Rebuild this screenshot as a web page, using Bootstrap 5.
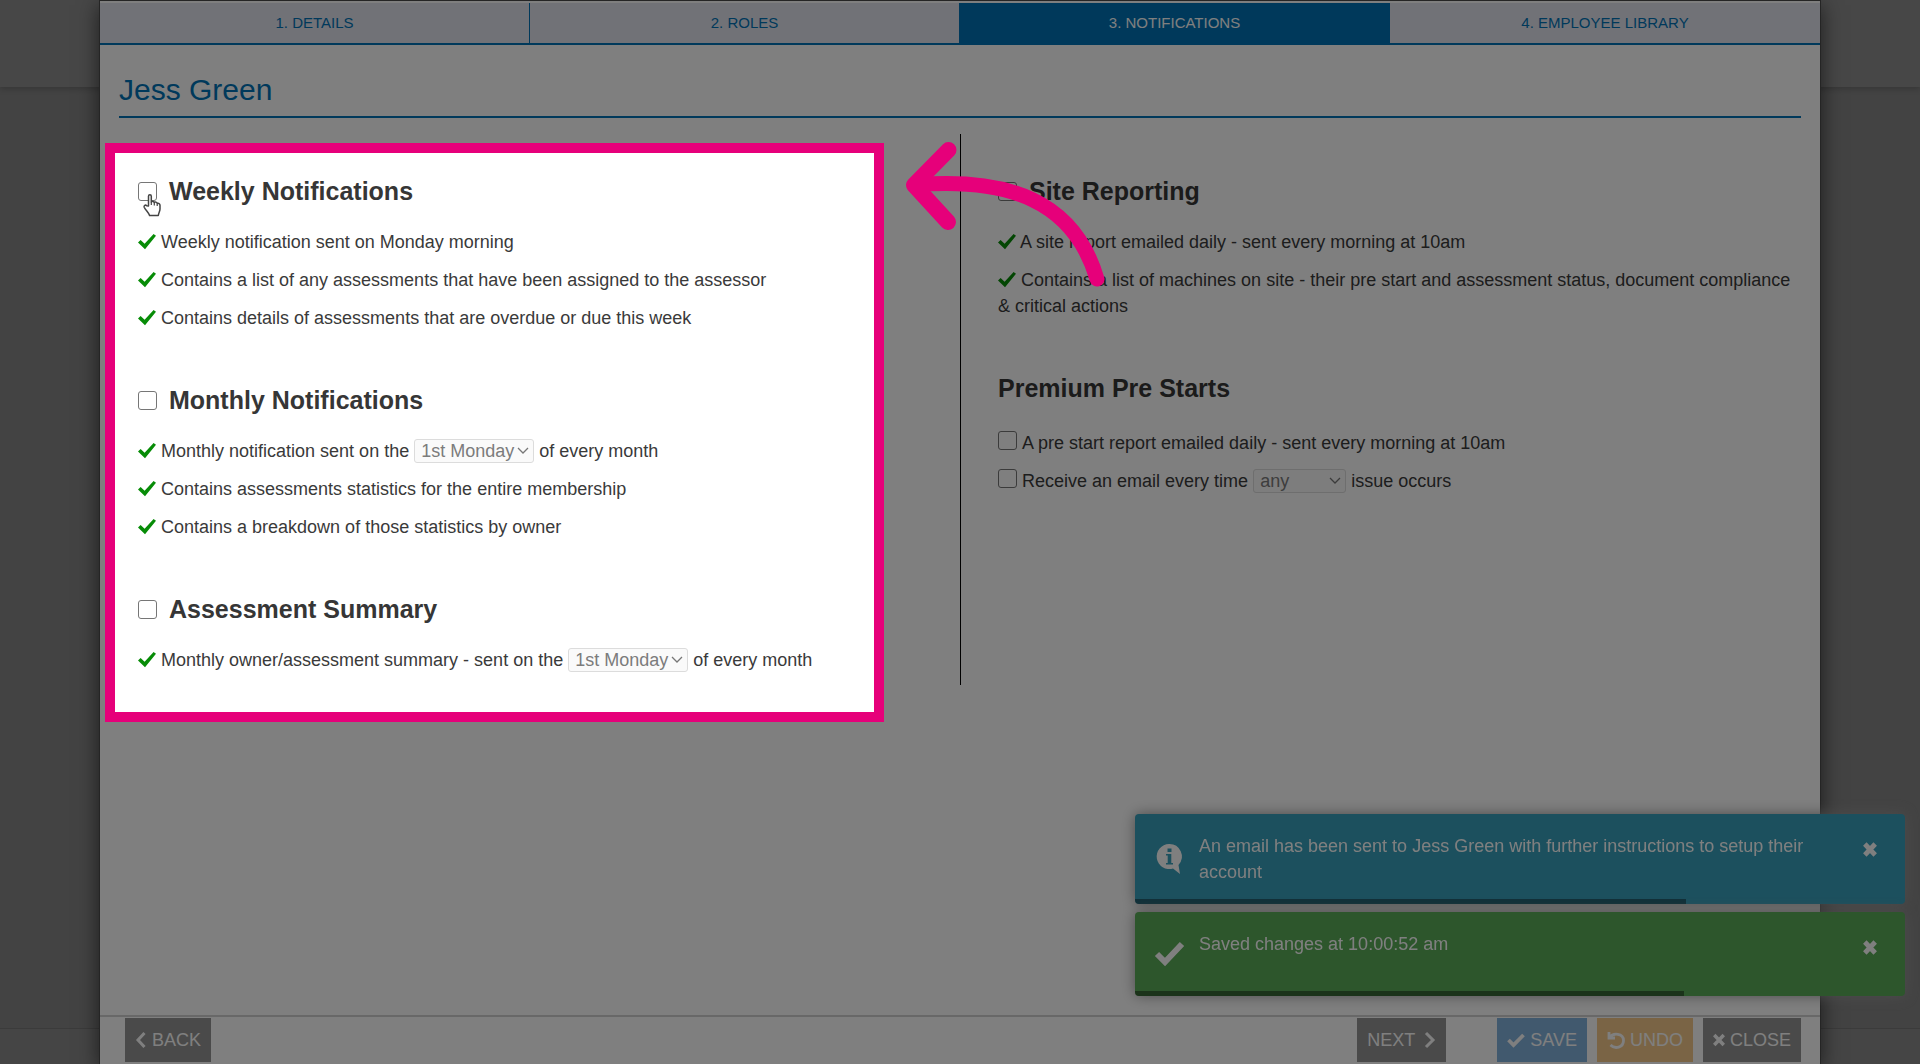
<!DOCTYPE html>
<html lang="en">
<head>
<meta charset="utf-8">
<meta name="viewport" content="width=device-width, initial-scale=1">
<title>Jess Green - Notifications</title>
<link href="https://cdn.jsdelivr.net/npm/bootstrap@5.3.0/dist/css/bootstrap.min.css" rel="stylesheet">
<style>
  :root { --brand: #0073b7; --accent: #e6007a; --ink: #3a3a3a; }
  body { font-family: "Liberation Sans", Arial, sans-serif; font-size: 18px; line-height: 26px; color: var(--ink); background: #868686; }
  .backdrop-head { height: 87px; background: #8e8e8e; box-shadow: 0 2px 6px rgba(0,0,0,.2); }
  .backdrop-foot { height: 36px; background: #8a8a8a; border-top: 1px solid #767676; }
  .dialog-wrap { inset: 0; padding: 0 99px; }
  .dialog-box { background: #fff; border: 1px solid #4a4a4a; border-bottom: 0; padding-top: 2px; box-shadow: 0 5px 20px rgba(0,0,0,.6); }

  .step-tabs { border-bottom: 2px solid var(--brand); }
  .step-tabs .nav-link { padding: 7px 0; border-radius: 0; font-size: 15px; background: #e2e5ee; color: var(--brand); border-right: 1px solid var(--brand); }
  .step-tabs .nav-item:last-child .nav-link { border-right: 0; }
  .step-tabs .nav-link.active { background: var(--brand); color: #fff; }

  .dialog-body { padding: 27px 19px 0; }
  .person-name { margin: 0 0 16px; padding-bottom: 8px; border-bottom: 2px solid var(--brand); font-size: 30px; line-height: 36px; font-weight: 400; color: var(--brand); }
  .pane-left { padding: 0 0 0 19px; }
  .pane-right { padding: 0 6px 0 37px; border-left: 1px solid #000; }
  .notice-group { padding-top: 42px; }
  .notice-title { margin: 0 0 23px; font-size: 25px; line-height: 30px; font-weight: 700; color: #363636; display: flex; align-items: center; gap: 12px; }
  .notice-list { margin: 0; padding: 0; list-style: none; }
  .notice-list li { margin-bottom: 12px; }
  .option-list { padding-top: 4px; }
  .tick { width: 18px; height: 16px; fill: #078c07; vertical-align: -2px; }
  .box { appearance: none; width: 19px; height: 19px; margin: 0; flex: none; background: #fff; border: 1px solid #767676; border-radius: 3px; }
  .option-list .box { vertical-align: -1px; }
  .pick { appearance: none; height: 24px; width: 120px; padding: 0 6px; font-size: 18px; line-height: 22px; color: #7c7c7c; opacity: 1; vertical-align: middle; margin-top: -3px; margin-bottom: -1px;
    border: 1px solid #dcdcdc; border-radius: 3px;
    background: #fafafa url("data:image/svg+xml,%3Csvg xmlns='http://www.w3.org/2000/svg' viewBox='0 0 12 8'%3E%3Cpath d='M1 1l5 5 5-5' fill='none' stroke='%23777' stroke-width='1.3'/%3E%3C/svg%3E") no-repeat right 4px center / 12px 8px; }
  .pick-short { width: 93px; }

  /* Tour step: highlighted region, pointer arrow and hand */
  .spotlight { left: -14px; right: 76px; top: 9px; bottom: -37px; border: 10px solid var(--accent); box-shadow: 0 0 0 200vmax rgba(0,0,0,.5); z-index: 20; pointer-events: none; }
  .tour-arrow { top: 2px; right: -149px; width: 210px; height: 160px; z-index: 21; pointer-events: none; }
  .hand { left: 4px; top: 17px; width: 20px; height: 25px; z-index: 22; }

  .dialog-foot { border-top: 2px solid #d0d0d0; padding: 1px 19px 2px 25px; }
  .act { border: 0; border-radius: 0; height: 44px; padding: 0 10px; font-size: 18px; line-height: 44px; color: #fff; background: #949494; display: flex; align-items: center; gap: 5px; }
  .act:disabled { color: #fff; opacity: .65; }
  .act-save:disabled { background: #428bca; }
  .act-undo:disabled { background: #f0ad4e; }
  .act svg { fill: none; stroke: currentColor; }
  .foot-group { gap: 10px; }
  .gap-next { margin-right: 41px; }

  .notes { right: 15px; bottom: 68px; width: 770px; z-index: 10; }
  .note { min-height: 84px; padding: 19px 19px 13px 64px; border-radius: 4px; color: #fff; box-shadow: 0 0 14px #999; overflow: hidden; }
  .note-info { min-height: 90px; background: #38a0bc; }
  .note-ok { background: #5aac58; }
  .note-icon { left: 18px; top: 50%; transform: translateY(-50%); width: 32px; height: 32px; }
  .note-text { flex: 1; padding-right: 20px; }
  .note-x { flex: none; width: 32px; height: 32px; border: 0; padding: 0; background: none; display: flex; align-items: center; justify-content: center; }
  .note-bar { left: 0; bottom: 0; height: 5px; background: #000; opacity: .4; }
</style>
</head>
<body>
<div class="d-flex flex-column min-vh-100">
  <div class="backdrop-head"></div>
  <div class="flex-grow-1"></div>
  <div class="backdrop-foot"></div>
</div>

<svg class="d-none" aria-hidden="true">
  <symbol id="tick" viewBox="0 0 18 16"><path d="M0 8.600L2.600 6 6.600 9.800 15.600 0 18 1.800 7 15.200Z"/></symbol>
</svg>

<div class="dialog-wrap position-absolute d-flex">
  <main class="dialog-box flex-grow-1 d-flex flex-column" role="dialog" aria-labelledby="person">
    <ul class="nav nav-justified step-tabs">
      <li class="nav-item"><a class="nav-link" href="#details">1. DETAILS</a></li>
      <li class="nav-item"><a class="nav-link" href="#roles">2. ROLES</a></li>
      <li class="nav-item"><a class="nav-link active" aria-current="page" href="#notifications">3. NOTIFICATIONS</a></li>
      <li class="nav-item"><a class="nav-link" href="#library">4. EMPLOYEE LIBRARY</a></li>
    </ul>

    <div class="dialog-body flex-grow-1">
      <h1 class="person-name" id="person">Jess Green</h1>
      <div class="row g-0">
        <div class="col-6 pane-left position-relative">
          <section class="notice-group">
            <h2 class="notice-title position-relative">
              <input class="box" type="checkbox" id="weekly"><label for="weekly">Weekly Notifications</label>
              <svg class="hand position-absolute" viewBox="0 0 20 25" aria-hidden="true"><path d="M6.500 13V3.200C6.500 1.200 9.300 1.200 9.300 3.200V9C10 8 12 8.200 12.300 9.500 13.200 8.700 15 9 15.200 10.500 16.500 9.900 18 10.700 18 12.300V16C18 18 16.800 19.500 16.300 22.500H7.600C7 20 3.500 17 2.200 14.200 1.500 12.500 3.500 11.500 4.700 12.700Z" fill="#fff" stroke="#444" stroke-width="1.500" stroke-linejoin="round"/><path d="M9.300 9V12M12.300 9.800V12.500M15.200 10.800V13" stroke="#444" stroke-width="1.200"/></svg>
            </h2>
            <ul class="notice-list">
              <li><svg class="tick"><use href="#tick"/></svg> Weekly notification sent on Monday morning</li>
              <li><svg class="tick"><use href="#tick"/></svg> Contains a list of any assessments that have been assigned to the assessor</li>
              <li><svg class="tick"><use href="#tick"/></svg> Contains details of assessments that are overdue or due this week</li>
            </ul>
          </section>
          <section class="notice-group">
            <h2 class="notice-title"><input class="box" type="checkbox" id="monthly"><label for="monthly">Monthly Notifications</label></h2>
            <ul class="notice-list">
              <li><svg class="tick"><use href="#tick"/></svg> <label for="monthday">Monthly notification sent on the</label> <select class="pick" id="monthday" disabled><option>1st Monday</option></select> of every month</li>
              <li><svg class="tick"><use href="#tick"/></svg> Contains assessments statistics for the entire membership</li>
              <li><svg class="tick"><use href="#tick"/></svg> Contains a breakdown of those statistics by owner</li>
            </ul>
          </section>
          <section class="notice-group">
            <h2 class="notice-title"><input class="box" type="checkbox" id="summary"><label for="summary">Assessment Summary</label></h2>
            <ul class="notice-list">
              <li><svg class="tick"><use href="#tick"/></svg> <label for="sumday">Monthly owner/assessment summary - sent on the</label> <select class="pick" id="sumday" disabled><option>1st Monday</option></select> of every month</li>
            </ul>
          </section>
          <div class="spotlight position-absolute"></div>
          <svg class="tour-arrow position-absolute" viewBox="0 0 210 160" fill="none" stroke="#e6007a" stroke-linecap="round" stroke-linejoin="round" aria-hidden="true">
            <path d="M15 49C110 41 175 65 198 143" stroke-width="15"/><path d="M49.500 14L15 49 49 86" stroke-width="16"/>
          </svg>
        </div>
        <div class="col-6 pane-right">
          <section class="notice-group">
            <h2 class="notice-title"><input class="box" type="checkbox" id="site"><label for="site">Site Reporting</label></h2>
            <ul class="notice-list">
              <li><svg class="tick"><use href="#tick"/></svg> A site report emailed daily - sent every morning at 10am</li>
              <li><svg class="tick"><use href="#tick"/></svg> Contains a list of machines on site - their pre start and assessment status, document compliance &amp; critical actions</li>
            </ul>
          </section>
          <section class="notice-group">
            <h2 class="notice-title">Premium Pre Starts</h2>
            <ul class="notice-list option-list">
              <li><input class="box" type="checkbox" id="prestart"> <label for="prestart">A pre start report emailed daily - sent every morning at 10am</label></li>
              <li><input class="box" type="checkbox" id="issue"> <label for="issue">Receive an email every time</label> <select class="pick pick-short" aria-label="Issue type" disabled><option>any</option></select> issue occurs</li>
            </ul>
          </section>
        </div>
      </div>
    </div>

    <div class="dialog-foot d-flex">
      <button class="act me-auto" type="button"><svg width="12" height="18" viewBox="0 0 12 18" stroke-width="3"><path d="M9.500 2L3 9l6.500 7"/></svg>BACK</button>
      <div class="foot-group d-flex">
        <button class="act gap-next" type="button">NEXT<svg class="ms-1" width="12" height="18" viewBox="0 0 12 18" stroke-width="3"><path d="M2 2l7 7-7 7"/></svg></button>
        <button class="act act-save" type="button" disabled><svg width="18" height="16" viewBox="0 0 18 16" stroke-width="3.800"><path d="M1.500 8l5 5L16.500 3"/></svg>SAVE</button>
        <button class="act act-undo" type="button" disabled><svg width="18" height="18" viewBox="0 0 18 18" stroke-width="2.800"><path d="M2 1v6h6M2.500 6.500C6 1.500 16.500 2 16.500 9.500 16.500 16.500 8 18.500 3.500 14"/></svg>UNDO</button>
        <button class="act" type="button"><svg width="12" height="14" viewBox="0 0 12 14" stroke-width="3.600"><path d="M1.200 2l9.600 10M10.800 2L1.200 12"/></svg>CLOSE</button>
      </div>
    </div>
  </main>
</div>

<div class="notes position-fixed d-flex flex-column gap-2">
  <div class="note note-info position-relative d-flex" role="status">
    <svg class="note-icon position-absolute" viewBox="0 0 32 32" aria-hidden="true"><path d="M16 1a12.500 12.500 0 0 1 9.500 21L27 31 20 25.400A12.500 12.500 0 1 1 16 1Z" fill="#fff"/><path d="M14.500 5.500h4v3.400h-4zM13 11h5.300v9h1.700v1.600h-7v-1.600h1.700v-7.400h-1.700z" fill="#38a0bc"/></svg>
    <span class="note-text">An email has been sent to Jess Green with further instructions to setup their account</span>
    <button class="note-x" type="button" aria-label="Close"><svg width="14" height="15" viewBox="0 0 14 15" stroke="#fff" stroke-width="4.800"><path d="M1.800 2l10.400 11M12.200 2L1.800 13"/></svg></button>
    <div class="note-bar position-absolute" style="width:71.6%"></div>
  </div>
  <div class="note note-ok position-relative d-flex" role="status">
    <svg class="note-icon position-absolute" viewBox="0 0 32 32" aria-hidden="true"><path d="M4 16l8 8L29 6" fill="none" stroke="#fff" stroke-width="6"/></svg>
    <span class="note-text">Saved changes at 10:00:52 am</span>
    <button class="note-x" type="button" aria-label="Close"><svg width="14" height="15" viewBox="0 0 14 15" stroke="#fff" stroke-width="4.800"><path d="M1.800 2l10.400 11M12.200 2L1.800 13"/></svg></button>
    <div class="note-bar position-absolute" style="width:71.3%"></div>
  </div>
</div>
<script src="https://cdn.jsdelivr.net/npm/bootstrap@5.3.0/dist/js/bootstrap.bundle.min.js"></script>
</body>
</html>
